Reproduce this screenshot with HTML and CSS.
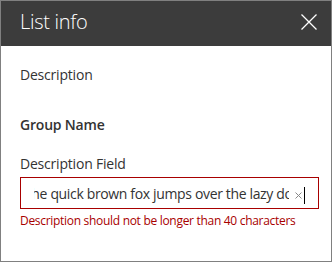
FILE: index.html
```html
<!doctype html>
<html>
  <head>
    <meta charset="utf-8">
    <link rel="stylesheet" href="styles.css">
  </head>
  <body>
    <div class="panel">
      <div class="header">
        <h1 class="title">List info</h1>
        <span class="close">
          <svg width="16" height="16" viewBox="0 0 16 16">
            <path d="M0.5 0.5 L15.5 15.5 M15.5 0.5 L0.5 15.5" stroke="#fff" stroke-width="1.3" fill="none"/>
          </svg>
        </span>
      </div>
      <div class="content">
        <p class="label">Description</p>
        <p class="group">Group Name</p>
        <p class="field-label">Description Field</p>
        <div class="field">
          <div class="field-text"><span>The quick brown fox jumps over the lazy dog</span></div>
          <span class="clear">
            <svg width="7" height="7" viewBox="0 0 7 7">
              <path d="M0.5 0.5 L6.5 6.5 M6.5 0.5 L0.5 6.5" stroke="#888" stroke-width="1" fill="none"/>
            </svg>
          </span>
          <span class="caret"></span>
        </div>
        <p class="error">Description should not be longer than 40 characters</p>
      </div>
    </div>
  </body>
</html>
```

FILE: styles.css
```css
html, body {
  margin: 0;
  padding: 0;
}
body {
  font-family: "Open Sans", "Noto Sans", sans-serif;
  color: #333;
}
p {
  margin: 0;
}
.panel {
  width: 332px;
  height: 262px;
  box-sizing: border-box;
  border: 1px solid #808080;
  background: #fff;
}
.header {
  height: 45px;
  box-sizing: border-box;
  background: #3c3c3c;
  display: flex;
  align-items: center;
  justify-content: space-between;
  padding: 0 14px 3px 19px;
}
.title {
  margin: 0;
  font-size: 20px;
  font-weight: 300;
  letter-spacing: -0.3px;
  color: #fff;
  line-height: 28px;
}
.close {
  display: flex;
  width: 16px;
  height: 16px;
}
.content {
  padding: 19px 12px 0 19px;
  font-size: 14px;
  letter-spacing: -0.2px;
}
.label {
  line-height: 20px;
}
.group {
  margin-top: 30px;
  line-height: 20px;
  font-weight: 600;
}
.field-label {
  margin-top: 19px;
  line-height: 20px;
}
.field {
  margin-top: 3px;
  height: 32px;
  box-sizing: border-box;
  border: 1px solid #a80000;
  display: flex;
  align-items: center;
  padding: 0 0 0 13px;
}
.field-text {
  width: 255px;
  overflow: hidden;
  white-space: nowrap;
  font-size: 14px;
  letter-spacing: -0.35px;
  color: #333;
  line-height: 20px;
  margin-top: 2px;
}
.field-text span {
  display: inline-block;
  margin-left: -10px;
}
.clear {
  display: flex;
  margin: 4px 0 0 6px;
}
.caret {
  margin: 5px 0 0 2px;
  width: 1px;
  height: 17px;
  background: #000;
}
.error {
  margin-top: 4px;
  font-size: 12px;
  letter-spacing: -0.3px;
  line-height: 16px;
  color: #a80000;
}
```
